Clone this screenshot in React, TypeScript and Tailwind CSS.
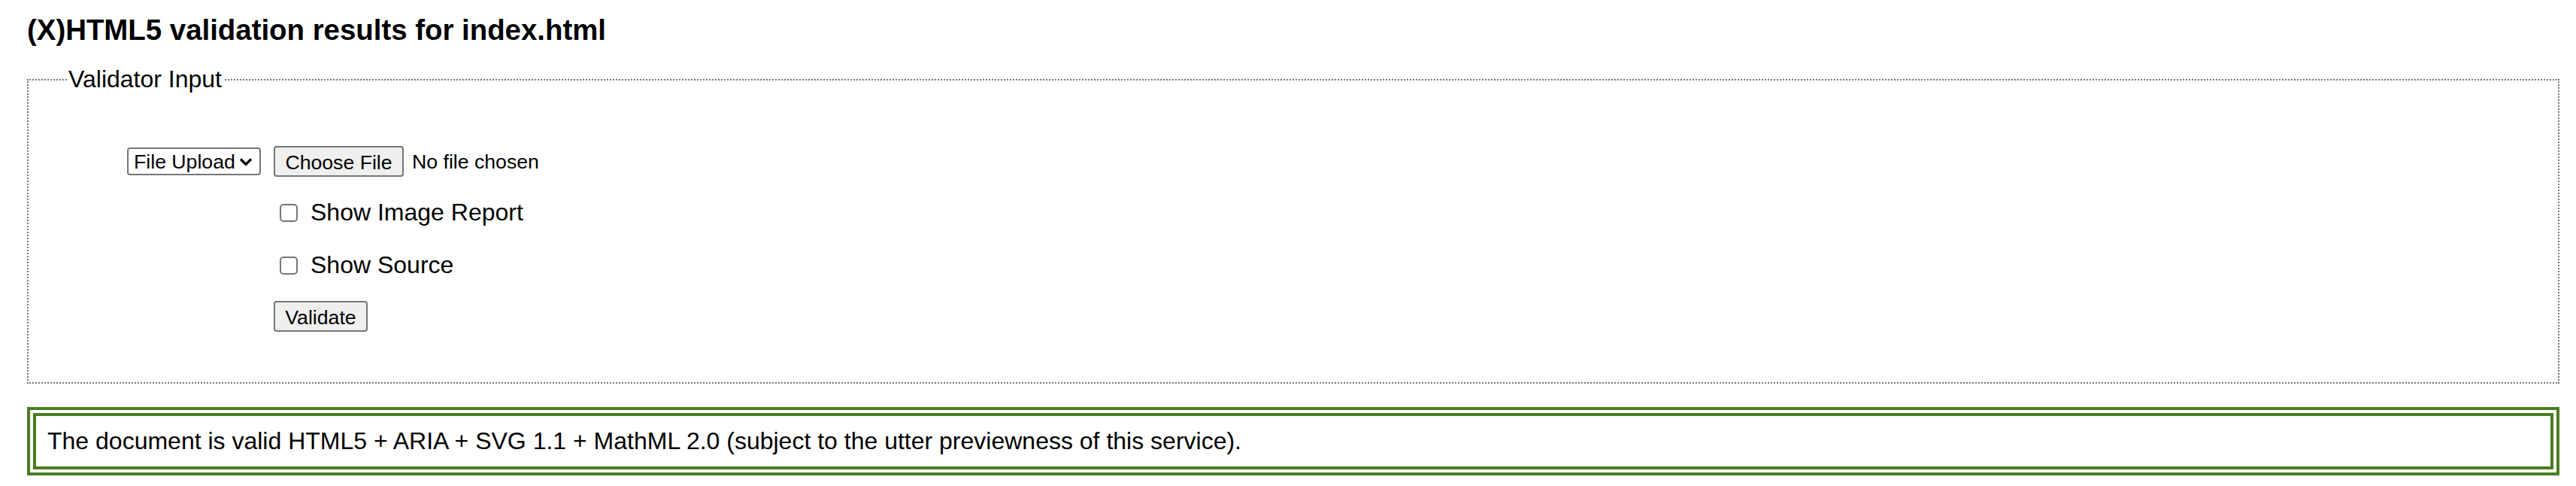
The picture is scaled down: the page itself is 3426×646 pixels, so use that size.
const font = "font-['Liberation_Sans',Arial,Helvetica,sans-serif]";

const Checkbox = ({ label }: { label: string }) => (
  <label className="flex h-[37px] items-center">
    <input
      type="checkbox"
      className="h-[24px] w-[24px] appearance-none rounded-[5px] border-2 border-[#767676] bg-white"
    />
    <span className="ml-[17px] leading-[37px]">{label}</span>
  </label>
);

export default function App() {
  return (
    <div
      className={`${font} min-h-screen bg-white pl-[36px] pr-[22px] pt-[18px] text-[32px] text-black`}
    >
      <h2 className="text-[38.4px] font-bold leading-[44px]">
        (X)HTML5 validation results for index.html
      </h2>

      {/* Input form */}
      <fieldset className="mt-[25px] border-2 border-dotted border-[#767676] pl-[51px] pb-[64px]">
        <legend className="px-[2px] leading-[37px]">Validator Input</legend>

        <div className="ml-[80px] mt-[70px] flex h-[41px] items-center text-[26.67px]">
          <div className="flex h-[37px] w-[178px] items-center justify-between rounded-[4px] border-2 border-[#767676] bg-white pl-[7px] pr-[9px]">
            <span>File Upload</span>
            <svg width="18" height="12" viewBox="0 0 18 12" fill="none">
              <path d="M2 2.5 L9 9.5 L16 2.5" stroke="black" strokeWidth="3.2" />
            </svg>
          </div>
          <button className="ml-[17px] h-[41px] w-[173px] rounded-[4px] border-2 border-[#767676] bg-[#efefef]">
            Choose File
          </button>
          <span className="ml-[11px]">No file chosen</span>
        </div>

        <div className="ml-[283px] mt-[29px]">
          <Checkbox label="Show Image Report" />
        </div>
        <div className="ml-[283px] mt-[33px]">
          <Checkbox label="Show Source" />
        </div>

        <div className="ml-[275px] mt-[25px]">
          <button className="h-[41px] w-[125px] rounded-[4px] border-2 border-[#767676] bg-[#efefef] text-[26.67px]">
            Validate
          </button>
        </div>
      </fieldset>

      {/* Result */}
      <div className="mt-[31px] border-[12px] border-double border-[#4a7d21] px-[15px] py-[15px] leading-[37px]">
        The document is valid HTML5 + ARIA + SVG 1.1 + MathML 2.0 (subject to the utter previewness of this service).
      </div>
    </div>
  );
}
